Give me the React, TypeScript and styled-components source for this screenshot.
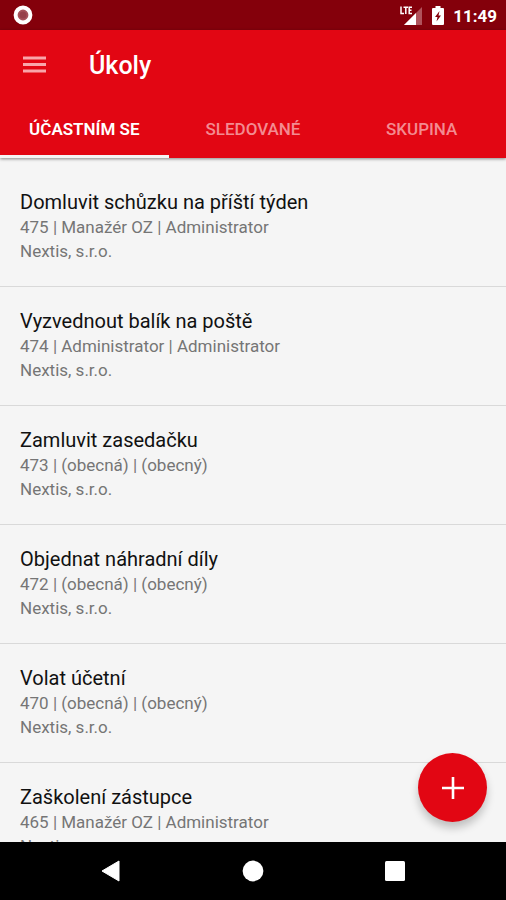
import React, { useState } from "react";
import styled, { createGlobalStyle } from "styled-components";

const GlobalStyle = createGlobalStyle`
  *, *::before, *::after { box-sizing: border-box; }
  body { margin: 0; background: #f5f5f5; font-family: Roboto, "Noto Sans", sans-serif; }
`;

const Screen = styled.div`
  display: flex;
  flex-direction: column;
  height: 100vh;
  background: #f5f5f5;
`;

const StatusBar = styled.div`
  flex: none;
  display: flex;
  align-items: center;
  justify-content: space-between;
  height: 30px;
  padding: 0 9px 0 13px;
  background: #84000b;
  color: #fff;
`;

const StatusIcons = styled.div`
  display: flex;
  align-items: center;
`;

const StatusIcon = styled.svg`
  display: block;
`;

const Clock = styled.time`
  margin-left: 8px;
  padding-top: 2px;
  font-size: 17px;
  line-height: 22px;
  font-weight: 700;
`;

const Header = styled.header`
  flex: none;
  position: relative;
  z-index: 1;
  background: #e20613;
  color: #fff;
  box-shadow: 0 1px 3px rgba(0, 0, 0, 0.45);
`;

const Toolbar = styled.div`
  display: flex;
  align-items: center;
  gap: 42px;
  height: 70px;
  padding-left: 22px;
`;

const PlainButton = styled.button`
  display: flex;
  align-items: center;
  justify-content: center;
  padding: 0;
  border: 0;
  background: none;
  cursor: pointer;
`;

const MenuButton = styled(PlainButton)`
  height: 40px;
`;

const Title = styled.h1`
  margin: 0;
  padding-top: 2px;
  font-size: 25px;
  line-height: 30px;
  font-weight: 500;
`;

const Tabs = styled.div`
  display: grid;
  grid-template-columns: repeat(3, 1fr);
`;

const Tab = styled.button<{ $active: boolean }>`
  height: 58px;
  padding: 2px 0 0;
  border: 0;
  border-bottom: 3px solid ${(p) => (p.$active ? "#f5f5f5" : "transparent")};
  background: none;
  color: ${(p) => (p.$active ? "#fff" : "#f38b91")};
  font-family: inherit;
  font-size: 17px;
  line-height: 24px;
  font-weight: ${(p) => (p.$active ? 600 : 500)};
  cursor: pointer;
`;

const TaskList = styled.ul`
  flex: 1;
  min-height: 0;
  overflow: hidden;
  margin: 0;
  padding: 10px 0 0;
  list-style: none;
`;

const TaskRow = styled.li`
  padding: 21px 20px 23px;
  border-bottom: 1px solid #d9d9d9;
`;

const TaskTitle = styled.h2`
  margin: 0;
  color: #111;
  font-size: 20px;
  line-height: 26px;
  font-weight: 400;
`;

const TaskMeta = styled.p`
  margin: 0;
  color: #757575;
  font-size: 17px;
  line-height: 24px;
`;

const AddButton = styled(PlainButton)`
  position: fixed;
  right: 19px;
  bottom: 78px;
  z-index: 2;
  width: 69px;
  height: 69px;
  border-radius: 50%;
  background: #e20613;
  box-shadow: 0 6px 8px rgba(0, 0, 0, 0.22);
`;

const NavBar = styled.nav`
  flex: none;
  display: flex;
  align-items: center;
  justify-content: center;
  gap: 94px;
  height: 58px;
  background: #000;
`;

const NavButton = styled(PlainButton)`
  width: 48px;
  height: 48px;
`;

const tabs = ["ÚČASTNÍM SE", "SLEDOVANÉ", "SKUPINA"];

const tasks = [
  { id: 475, title: "Domluvit schůzku na příští týden", people: "Manažér OZ | Administrator" },
  { id: 474, title: "Vyzvednout balík na poště", people: "Administrator | Administrator" },
  { id: 473, title: "Zamluvit zasedačku", people: "(obecná) | (obecný)" },
  { id: 472, title: "Objednat náhradní díly", people: "(obecná) | (obecný)" },
  { id: 470, title: "Volat účetní", people: "(obecná) | (obecný)" },
  { id: 465, title: "Zaškolení zástupce", people: "Manažér OZ | Administrator" },
];

export default function App() {
  const [active, setActive] = useState(0);
  return (
    <>
      <GlobalStyle />
      <Screen>
        <StatusBar>
          <StatusIcon width="20" height="20" viewBox="0 0 20 20" aria-hidden="true">
            <circle cx="10" cy="10" r="7.4" fill="#a6525b" stroke="#fff" strokeWidth="4" />
            <circle cx="10" cy="10" r="3.5" fill="#96404a" />
          </StatusIcon>
          <StatusIcons>
            <StatusIcon width="46" height="22" viewBox="0 0 46 22" role="img" aria-label="LTE, nabíjení">
              <path d="M23 3V21H5Z" fill="#b0525b" />
              <path d="M17 9V21H5Z" fill="#fff" />
              <path d="M0 1H13V11H0Z" fill="#84000b" />
              <path d="M2 2.500V9.500H5M4.500 3.200H9M6.800 3.200V10M13 3.200H10.200V9.500H13M10.200 6.300H12.500" fill="none" stroke="#fff" strokeWidth="1.500" />
              <path d="M36.500 2H41.500V4H44Q45 4 45 5V20Q45 21 44 21H34Q33 21 33 20V5Q33 4 34 4H36.500Z" fill="#fff" />
              <path d="M40.500 7L36 13H38.500L37.500 17.500L42 11.500H39.500Z" fill="#84000b" />
            </StatusIcon>
            <Clock>11:49</Clock>
          </StatusIcons>
        </StatusBar>
        <Header>
          <Toolbar>
            <MenuButton aria-label="Nabídka">
              <svg width="25" height="20" viewBox="0 0 25 20" aria-hidden="true">
                <path d="M1 3H24M1 9.500H24M1 16H24" stroke="#f9a5aa" strokeWidth="2.800" />
              </svg>
            </MenuButton>
            <Title>Úkoly</Title>
          </Toolbar>
          <Tabs role="tablist">
            {tabs.map((label, i) => (
              <Tab key={label} role="tab" aria-selected={i === active} $active={i === active} onClick={() => setActive(i)}>
                {label}
              </Tab>
            ))}
          </Tabs>
        </Header>
        <TaskList>
          {tasks.map((task) => (
            <TaskRow key={task.id}>
              <TaskTitle>{task.title}</TaskTitle>
              <TaskMeta>{`${task.id} | ${task.people}`}</TaskMeta>
              <TaskMeta>Nextis, s.r.o.</TaskMeta>
            </TaskRow>
          ))}
        </TaskList>
        <AddButton aria-label="Přidat úkol">
          <svg width="24" height="24" viewBox="0 0 24 24" aria-hidden="true">
            <path d="M12 1V23M1 12H23" stroke="#fff" strokeWidth="2.600" />
          </svg>
        </AddButton>
        <NavBar aria-label="Systémová navigace">
          <NavButton aria-label="Zpět">
            <svg width="22" height="24" viewBox="0 0 22 24" aria-hidden="true">
              <path d="M2 12L19 2V22Z" fill="#fff" stroke="#fff" strokeLinejoin="round" />
            </svg>
          </NavButton>
          <NavButton aria-label="Domů">
            <svg width="22" height="22" viewBox="0 0 22 22" aria-hidden="true">
              <circle cx="11" cy="11" r="10.400" fill="#fff" />
            </svg>
          </NavButton>
          <NavButton aria-label="Přehled aplikací">
            <svg width="20" height="20" viewBox="0 0 20 20" aria-hidden="true">
              <rect width="20" height="20" rx="1.500" fill="#fff" />
            </svg>
          </NavButton>
        </NavBar>
      </Screen>
    </>
  );
}
